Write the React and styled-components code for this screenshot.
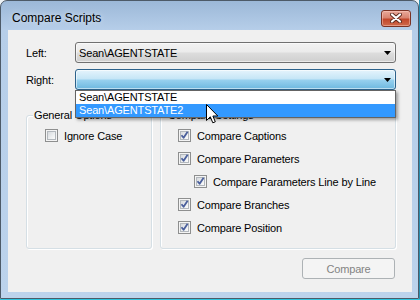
import React from "react";
import styled, { createGlobalStyle } from "styled-components";

const GlobalStyle = createGlobalStyle`
  html, body { margin: 0; padding: 0; }
  body {
    width: 420px;
    height: 300px;
    overflow: hidden;
    font-family: "Liberation Sans", Arial, sans-serif;
    font-size: 11px;
  }
  * { box-sizing: border-box; }
`;

const Desktop = styled.div`
  position: relative;
  width: 420px;
  height: 300px;
  background:
    linear-gradient(#2ec4de, #2ec4de) left bottom / 100% 1px no-repeat,
    linear-gradient(#2a8fb0, #2a8fb0) right top / 1px 100% no-repeat,
    #eef2f6;
`;

const Window = styled.div`
  width: 419px;
  height: 299px;
  border: 1px solid #4d5a68;
  border-radius: 7px 7px 0 0;
  background: linear-gradient(to bottom, #9cb8d8 0px, #b6cee9 29px, #bcd3ec 100%);
  display: flex;
  flex-direction: column;
  padding: 0 6px 6px 7px;
`;

const TitleBar = styled.div`
  height: 29px;
  flex: none;
  display: flex;
  align-items: center;
  justify-content: space-between;
  padding: 5px 1px 0 4px;
`;

const Title = styled.span`
  font-size: 12px;
  color: #000;
  text-shadow: 0 0 6px rgba(255, 255, 255, 0.7);
`;

const CloseButton = styled.div`
  width: 30px;
  height: 17px;
  border: 1px solid #7a3224;
  border-radius: 3px;
  background: linear-gradient(to bottom, #e9a99a 0%, #d88470 45%, #c2472b 55%, #cf6a4c 100%);
  box-shadow: inset 0 0 0 1px rgba(255, 210, 200, 0.45);
  display: flex;
  align-items: center;
  justify-content: center;
`;

const Client = styled.div`
  flex: 1;
  background: #f0f0f0;
  display: flex;
  flex-direction: column;
  padding: 12px 16px 0 18px;
  color: #000;
  letter-spacing: -0.15px;
`;

const FieldRow = styled.div`
  display: grid;
  grid-template-columns: 49px 1fr;
  align-items: center;
  height: 21px;
  margin-top: ${(p) => p.$gap || 0}px;
`;

const FieldLabel = styled.span`
  font-size: 11px;
`;

const ComboWrap = styled.div`
  position: relative;
  height: 21px;
`;

const Combo = styled.div`
  height: 21px;
  border: 1px solid ${(p) => (p.$pressed ? "#2c628b" : "#707070")};
  border-radius: 3px;
  display: flex;
  align-items: center;
  justify-content: space-between;
  padding: 0 4px 0 3px;
  font-size: 11px;
  background: ${(p) =>
    p.$pressed
      ? "linear-gradient(to bottom, #e5f4fc 0%, #c4e5f6 48%, #98d1ef 52%, #6db8df 100%)"
      : "linear-gradient(to bottom, #f2f2f2 0%, #ebebeb 48%, #dddddd 52%, #cfcfcf 100%)"};
  box-shadow: inset 0 0 0 1px rgba(255, 255, 255, 0.55);
`;

const DropList = styled.div`
  position: absolute;
  top: 100%;
  left: 0;
  width: 321px;
  background: #fff;
  border: 1px solid #646464;
  box-shadow: 2px 2px 3px rgba(0, 0, 0, 0.35);
  z-index: 2;
`;

const DropItem = styled.div`
  height: 13px;
  line-height: 13px;
  padding-left: 3px;
  font-size: 11px;
  background: ${(p) => (p.$selected ? "#3399ff" : "transparent")};
  color: ${(p) => (p.$selected ? "#fff" : "#000")};
`;

const Groups = styled.div`
  display: flex;
  gap: 8px;
  margin-top: 25px;
  height: 134px;
`;

const Group = styled.div`
  flex: ${(p) => (p.$width ? `0 0 ${p.$width}px` : "1")};
  border: 1px solid #d5dfe5;
  border-radius: 3px;
  box-shadow: inset 1px 1px 0 #fff, 1px 1px 0 #fff;
  display: flex;
  flex-direction: column;
  align-items: flex-start;
`;

const GroupTitle = styled.span`
  margin: -7px 0 0 6px;
  padding: 0 1px;
  height: 13px;
  line-height: 13px;
  background: #f0f0f0;
  font-size: 11px;
`;

const CheckList = styled.div`
  display: flex;
  flex-direction: column;
  gap: 10px;
  padding: 7px 0 0 ${(p) => p.$inset}px;
`;

const CheckRow = styled.label`
  display: flex;
  align-items: center;
  gap: 6px;
  height: 13px;
  font-size: 11px;
  margin-left: ${(p) => (p.$indent ? 16 : 0)}px;
`;

const Box = styled.span`
  width: 13px;
  height: 13px;
  flex: none;
  border: 1px solid #8e8f8f;
  background: #f4f4f4;
  padding: 1px;
  display: flex;
`;

const BoxInner = styled.span`
  flex: 1;
  border: 1px solid #b3b8bd;
  background: linear-gradient(135deg, #d6d9dd 0%, #eef0f1 60%, #fbfbfb 100%);
  display: flex;
  align-items: center;
  justify-content: center;
  position: relative;
`;

const Footer = styled.div`
  display: flex;
  justify-content: flex-end;
  margin-top: 9px;
  padding-right: 1px;
`;

const Button = styled.button`
  width: 93px;
  height: 21px;
  border: 1px solid #adb2b5;
  border-radius: 3px;
  background: #f4f4f4;
  color: #838383;
  font-family: "Liberation Sans", Arial, sans-serif;
  font-size: 11px;
  letter-spacing: -0.15px;
  padding: 0;
`;

const Cursor = styled.svg`
  position: absolute;
  left: 206px;
  top: 104px;
  z-index: 5;
`;

const Arrow = () => (
  <svg width="7" height="4" viewBox="0 0 7 4">
    <polygon points="0,0 7,0 3.5,4" fill="#000" />
  </svg>
);

const Check = ({ checked }) => (
  <Box>
    <BoxInner>
      {checked && (
        <svg
          width="9"
          height="9"
          viewBox="0 0 9 9"
          style={{ position: "absolute", left: -1, top: -1 }}
        >
          <path
            d="M1.5 4.2 L3.6 6.8 L7.6 0.8"
            fill="none"
            stroke="#4a5f9c"
            strokeWidth="1.8"
            strokeLinejoin="round"
          />
        </svg>
      )}
    </BoxInner>
  </Box>
);

const settings = [
  { label: "Compare Captions" },
  { label: "Compare Parameters" },
  { label: "Compare Parameters Line by Line", indent: true },
  { label: "Compare Branches" },
  { label: "Compare Position" },
];

export default function App() {
  return (
    <>
      <GlobalStyle />
      <Desktop>
        <Window>
          <TitleBar>
            <Title>Compare Scripts</Title>
            <CloseButton>
              <svg width="12" height="10" viewBox="0 0 12 10">
                <path d="M2 1.5 L10 8.5 M10 1.5 L2 8.5" stroke="#5b2a1f" strokeWidth="4" strokeLinecap="round" />
                <path d="M2 1.5 L10 8.5 M10 1.5 L2 8.5" stroke="#fff" strokeWidth="2.2" strokeLinecap="round" />
              </svg>
            </CloseButton>
          </TitleBar>
          <Client>
            <FieldRow>
              <FieldLabel>Left:</FieldLabel>
              <ComboWrap>
                <Combo>
                  <span>Sean\AGENTSTATE</span>
                  <Arrow />
                </Combo>
              </ComboWrap>
            </FieldRow>
            <FieldRow $gap={6}>
              <FieldLabel>Right:</FieldLabel>
              <ComboWrap>
                <Combo $pressed>
                  <span />
                  <Arrow />
                </Combo>
                <DropList>
                  <DropItem>Sean\AGENTSTATE</DropItem>
                  <DropItem $selected>Sean\AGENTSTATE2</DropItem>
                </DropList>
              </ComboWrap>
            </FieldRow>
            <Groups>
              <Group $width={126}>
                <GroupTitle>General Options</GroupTitle>
                <CheckList $inset={18}>
                  <CheckRow>
                    <Check />
                    Ignore Case
                  </CheckRow>
                </CheckList>
              </Group>
              <Group>
                <GroupTitle>Compare Settings</GroupTitle>
                <CheckList $inset={17}>
                  {settings.map((s) => (
                    <CheckRow key={s.label} $indent={s.indent}>
                      <Check checked />
                      {s.label}
                    </CheckRow>
                  ))}
                </CheckList>
              </Group>
            </Groups>
            <Footer>
              <Button disabled>Compare</Button>
            </Footer>
          </Client>
        </Window>
        <Cursor width="13" height="20" viewBox="0 0 13 20">
          <path
            d="M0.5 0.5 L0.5 16.5 L4.3 12.8 L6.8 18.8 L9.3 17.8 L6.9 12 L11.8 12 Z"
            fill="#fff"
            stroke="#000"
            strokeWidth="1"
            strokeLinejoin="miter"
          />
        </Cursor>
      </Desktop>
    </>
  );
}
